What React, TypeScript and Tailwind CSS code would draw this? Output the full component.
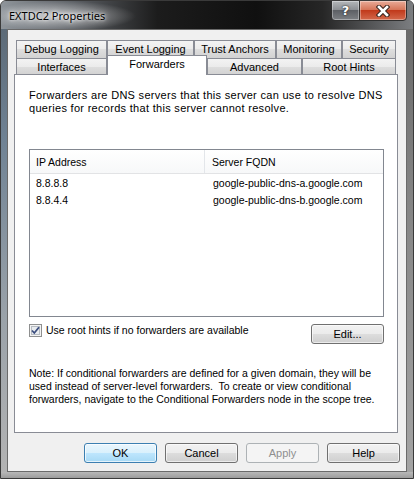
const rowsTop = [
  { label: "Debug Logging", w: 91 },
  { label: "Event Logging", w: 87 },
  { label: "Trust Anchors", w: 82 },
  { label: "Monitoring", w: 66 },
  { label: "Security", w: 54 },
];

const rowsFront = [
  { label: "Interfaces", w: 91 },
  { label: "Forwarders", w: 100, selected: true },
  { label: "Advanced", w: 95 },
  { label: "Root Hints", w: 94 },
];

const forwarders = [
  { ip: "8.8.8.8", fqdn: "google-public-dns-a.google.com" },
  { ip: "8.8.4.4", fqdn: "google-public-dns-b.google.com" },
];

function Tab({ label, w, selected }: { label: string; w: number; selected?: boolean }) {
  if (selected) {
    return (
      <div
        className="relative z-10 -mt-[2px] flex h-[20px] items-center justify-center border-x border-t border-[#898c95] bg-white pb-[2px]"
        style={{ width: w }}
      >
        {label}
      </div>
    );
  }
  return (
    <div
      className="flex h-full items-center justify-center border-x border-t border-[#898c95] bg-[linear-gradient(to_bottom,#f3f3f3,#ebebeb_50%,#dedede_50%,#d2d2d2)]"
      style={{ width: w }}
    >
      {label}
    </div>
  );
}

function Button({ children, primary, disabled }: { children: React.ReactNode; primary?: boolean; disabled?: boolean }) {
  let cls =
    "flex h-[20px] w-[73px] items-center justify-center rounded-[3px] border text-[11px] ";
  if (primary) {
    cls +=
      "border-[#3c7fb1] bg-[linear-gradient(to_bottom,#eaf6fd,#d9f0fc_50%,#bee6fd_50%,#a7d9f5)] shadow-[inset_0_0_0_1px_rgba(255,255,255,0.7)] text-black";
  } else if (disabled) {
    cls += "border-[#adb2b5] bg-[#f4f4f4] text-[#8f8f8f]";
  } else {
    cls +=
      "border-[#707070] bg-[linear-gradient(to_bottom,#f2f2f2,#ebebeb_50%,#dddddd_50%,#cfcfcf)] shadow-[inset_0_0_0_1px_rgba(255,255,255,0.6)] text-black";
  }
  return <div className={cls}>{children}</div>;
}

export default function App() {
  return (
    <div className="flex h-[479px] w-[414px] flex-col overflow-hidden rounded-t-[6px] border border-[#3a3a3a] bg-[#9a9a9a] font-['Liberation_Sans',Arial,sans-serif] text-[11px] leading-[13px] text-black">
      {/* title bar */}
      <div className="flex h-[28px] shrink-0 bg-[radial-gradient(ellipse_75px_15px_at_60px_15px,rgba(255,255,255,0.6),transparent),linear-gradient(to_right,#8f959b,#5a5e63_18%,#1c1c1c_38%,#101010_62%,#262626_78%,#7c7e81)]">
        <div className="pl-[8px] pt-[7px] font-['Noto_Sans',sans-serif] text-[11px] leading-[15px] text-black [text-shadow:0_0_6px_#fff,0_0_3px_#fff]">
          EXTDC2 Properties
        </div>
        <div className="ml-auto mr-[6px] -mt-[1px] flex h-[21px] self-start">
          <div className="flex w-[29px] items-center justify-center rounded-bl-[4px] border border-[#2f2f2f] bg-[linear-gradient(to_bottom,#b4b7ba,#8e9195_45%,#5d6065_50%,#7d8084)] shadow-[inset_0_0_0_1px_rgba(255,255,255,0.35)]">
            <span className="font-['DejaVu_Sans',sans-serif] text-[13px] font-bold leading-[13px] text-white [text-shadow:0_0_1px_#222,0_0_2px_#222]">
              ?
            </span>
          </div>
          <div className="-ml-[1px] flex w-[48px] items-center justify-center rounded-br-[4px] border border-[#2f2f2f] bg-[linear-gradient(to_bottom,#e9ab98,#d6765a_45%,#c13a1c_50%,#d3694c)] shadow-[inset_0_0_0_1px_rgba(255,255,255,0.35)]">
            <svg width="14" height="12" viewBox="0 0 14 12">
              <path d="M3 2 L11 10 M11 2 L3 10" stroke="#3b2620" strokeWidth="4.6" strokeLinecap="square" />
              <path d="M3 2 L11 10 M11 2 L3 10" stroke="#ffffff" strokeWidth="2.6" strokeLinecap="square" />
            </svg>
          </div>
        </div>
      </div>

      {/* body */}
      <div className="flex h-[443px] shrink-0">
        <div className="w-[6px] bg-[linear-gradient(to_bottom,#5c6a77,#6f8294_25%,#9aa2a9_65%,#b3b3b3)]" />
        <div className="flex w-[400px] flex-col border border-[#6a6a6a] bg-[#f0f0f0] pt-[10px]">
          {/* tabs */}
          <div className="ml-[8px] flex h-[18px] w-[380px]">
            {rowsTop.map((t) => (
              <Tab key={t.label} label={t.label} w={t.w} />
            ))}
          </div>
          <div className="ml-[8px] flex h-[17px] w-[380px] items-end">
            {rowsFront.map((t) => (
              <Tab key={t.label} label={t.label} w={t.w} selected={t.selected} />
            ))}
          </div>

          {/* panel */}
          <div className="-mt-[1px] ml-[6px] flex h-[359px] w-[384px] flex-col border border-[#898c95] bg-white pl-[14px] pr-[13px] text-[10.5px]">
            <p className="mt-[14px] whitespace-nowrap text-[11px] tracking-[0.3px]">
              Forwarders are DNS servers that this server can use to resolve DNS
              <br />
              queries for records that this server cannot resolve.
            </p>

            <div className="mt-[34px] h-[168px] border border-[#828790] bg-white">
              <div className="flex h-[24px] border-b border-[#e2e3e5] bg-linear-to-b from-white to-[#f7f8f9]">
                <div className="flex w-[175px] items-center border-r border-[#e3e6ea] pl-[6px] pt-[1px]">
                  IP Address
                </div>
                <div className="flex flex-1 items-center pl-[7px] pt-[1px]">Server FQDN</div>
              </div>
              <div className="pt-[1px]">
                {forwarders.map((f) => (
                  <div key={f.ip} className="flex h-[17px] items-center">
                    <div className="w-[175px] pl-[6px]">{f.ip}</div>
                    <div className="pl-[8px]">{f.fqdn}</div>
                  </div>
                ))}
              </div>
            </div>

            <div className="mt-[7px] flex items-start justify-between">
              <div className="flex h-[13px] items-center gap-[4px]">
                <svg width="13" height="13" viewBox="0 0 13 13">
                  <rect x="0.5" y="0.5" width="12" height="12" fill="#f4f4f4" stroke="#8e8f8f" />
                  <rect x="2.5" y="2.5" width="8" height="8" fill="#e9ecef" stroke="#b7bcc2" />
                  <path d="M3 6.5 L5.3 9 L10 3.3" fill="none" stroke="#3c4e7f" strokeWidth="1.8" />
                </svg>
                <span className="whitespace-nowrap">Use root hints if no forwarders are available</span>
              </div>
              <Button>Edit...</Button>
            </div>

            <p className="mt-[23px] whitespace-nowrap">
              Note: If conditional forwarders are defined for a given domain, they will be
              <br />
              used instead of server-level forwarders.&nbsp; To create or view conditional
              <br />
              forwarders, navigate to the Conditional Forwarders node in the scope tree.
            </p>
          </div>

          {/* buttons */}
          <div className="mt-[10px] flex justify-end gap-[8px] pr-[6px]">
            <Button primary>OK</Button>
            <Button>Cancel</Button>
            <Button disabled>Apply</Button>
            <Button>Help</Button>
          </div>
        </div>
        <div className="w-[6px] bg-[linear-gradient(to_bottom,#6b6b6b,#858585_40%,#a4a4a4)]" />
      </div>

      {/* bottom frame */}
      <div className="h-[6px] shrink-0 bg-[linear-gradient(to_bottom,#b8b8b8,#9c9c9c)]" />
    </div>
  );
}
